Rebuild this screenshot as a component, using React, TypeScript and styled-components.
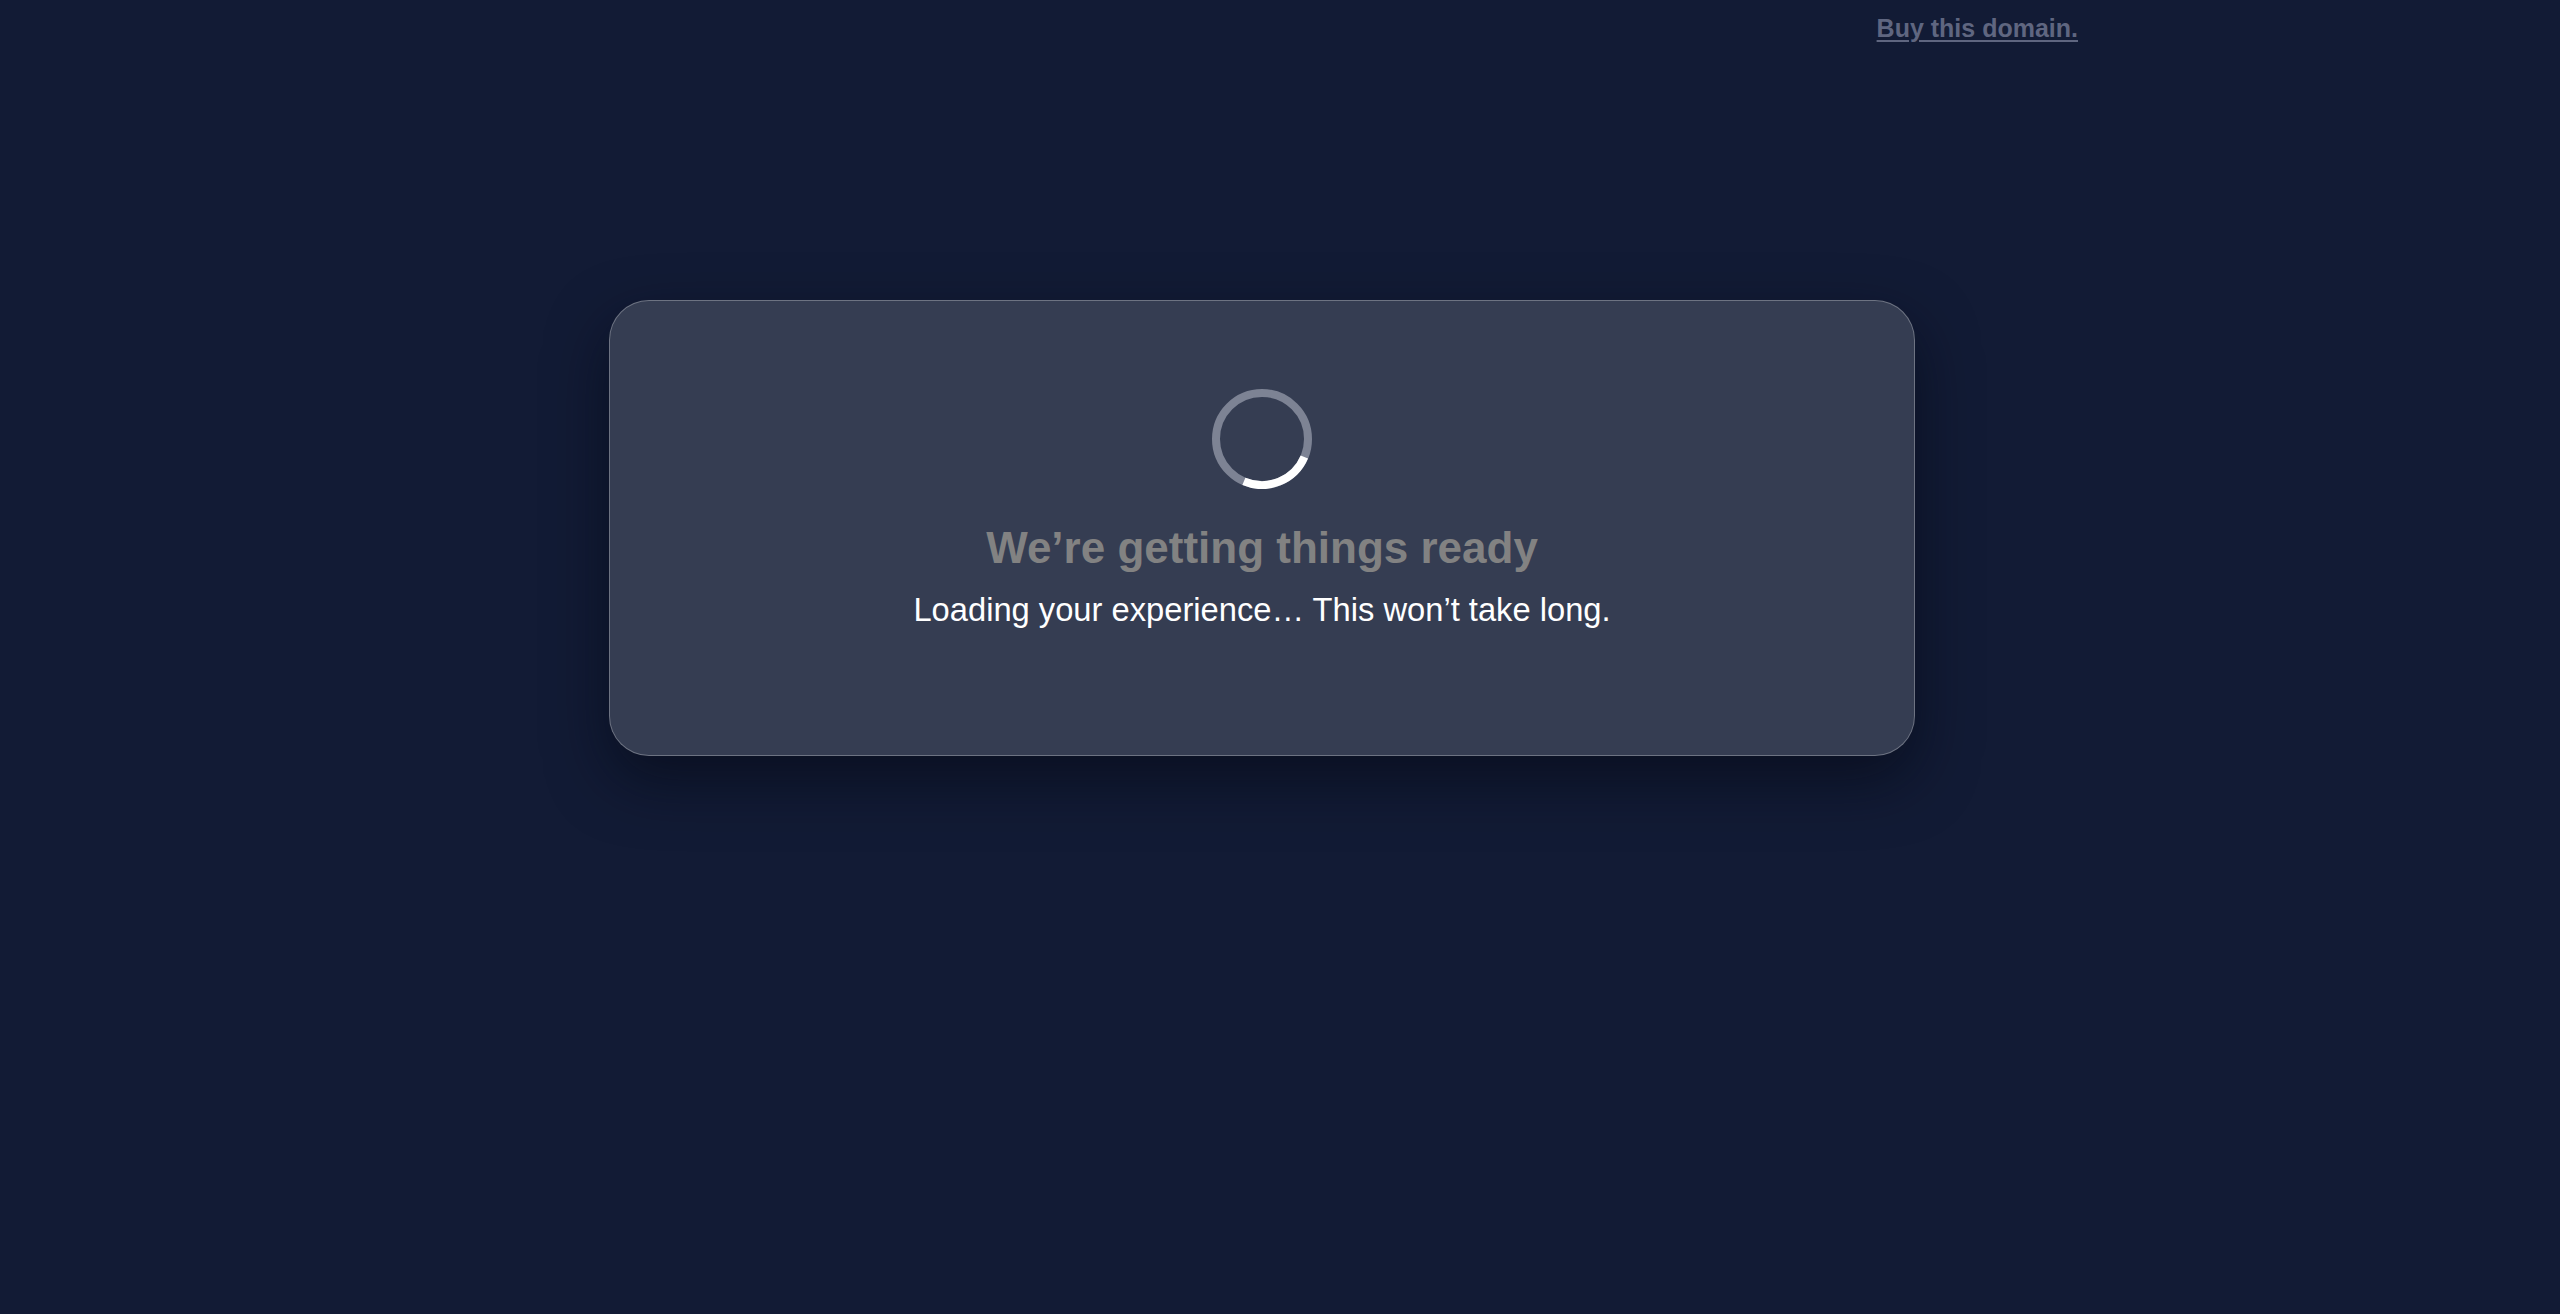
import React from 'react';
import styled, { createGlobalStyle } from 'styled-components';

const GlobalStyle = createGlobalStyle`
  html, body {
    margin: 0;
    padding: 0;
    background: #121b35;
    font-family: "Liberation Sans", Arial, sans-serif;
  }
`;

const Page = styled.div`
  min-height: 1314px;
  background: #121b35;
  display: flex;
  flex-direction: column;
`;

const TopBar = styled.div`
  display: flex;
  justify-content: flex-end;
  padding: 14px 482px 0 0;
`;

const DomainLink = styled.a`
  color: #5f6680;
  font-size: 25px;
  line-height: 29px;
  font-weight: 700;
  text-decoration: underline;
  text-underline-offset: 3px;
  cursor: pointer;
`;

const Main = styled.main`
  display: flex;
  justify-content: center;
  padding: 257px 36px 0 0;
`;

const Card = styled.section`
  width: 1306px;
  box-sizing: border-box;
  height: 456px;
  padding: 88px 0 0;
  background: #353d52;
  border: 1.5px solid rgba(255, 255, 255, 0.28);
  border-radius: 40px;
  box-shadow: 0 24px 60px rgba(4, 8, 18, 0.55);
  display: flex;
  flex-direction: column;
  align-items: center;
`;

const Spinner = styled.svg`
  width: 100px;
  height: 100px;
  display: block;
`;

const Heading = styled.h1`
  margin: 34px 0 0;
  color: #828282;
  font-size: 44px;
  font-weight: 700;
  line-height: 50px;
`;

const Subtitle = styled.p`
  margin: 18px 0 0;
  color: #ffffff;
  font-size: 32.7px;
  line-height: 38px;
`;

const App: React.FC = () => {
  const r = 46;
  const circ = 2 * Math.PI * r;

  return (
    <Page>
      <GlobalStyle />
      <TopBar>
        <DomainLink>Buy this domain.</DomainLink>
      </TopBar>
      <Main>
        <Card>
          <Spinner viewBox="0 0 100 100">
            <circle cx="50" cy="50" r={r} fill="none" stroke="#7d8394" strokeWidth="8" />
            <circle
              cx="50"
              cy="50"
              r={r}
              fill="none"
              stroke="#ffffff"
              strokeWidth="8"
              strokeDasharray={`${circ / 4} ${circ}`}
              transform="rotate(23 50 50)"
            />
          </Spinner>
          <Heading>We’re getting things ready</Heading>
          <Subtitle>Loading your experience… This won’t take long.</Subtitle>
        </Card>
      </Main>
    </Page>
  );
};

export default App;
